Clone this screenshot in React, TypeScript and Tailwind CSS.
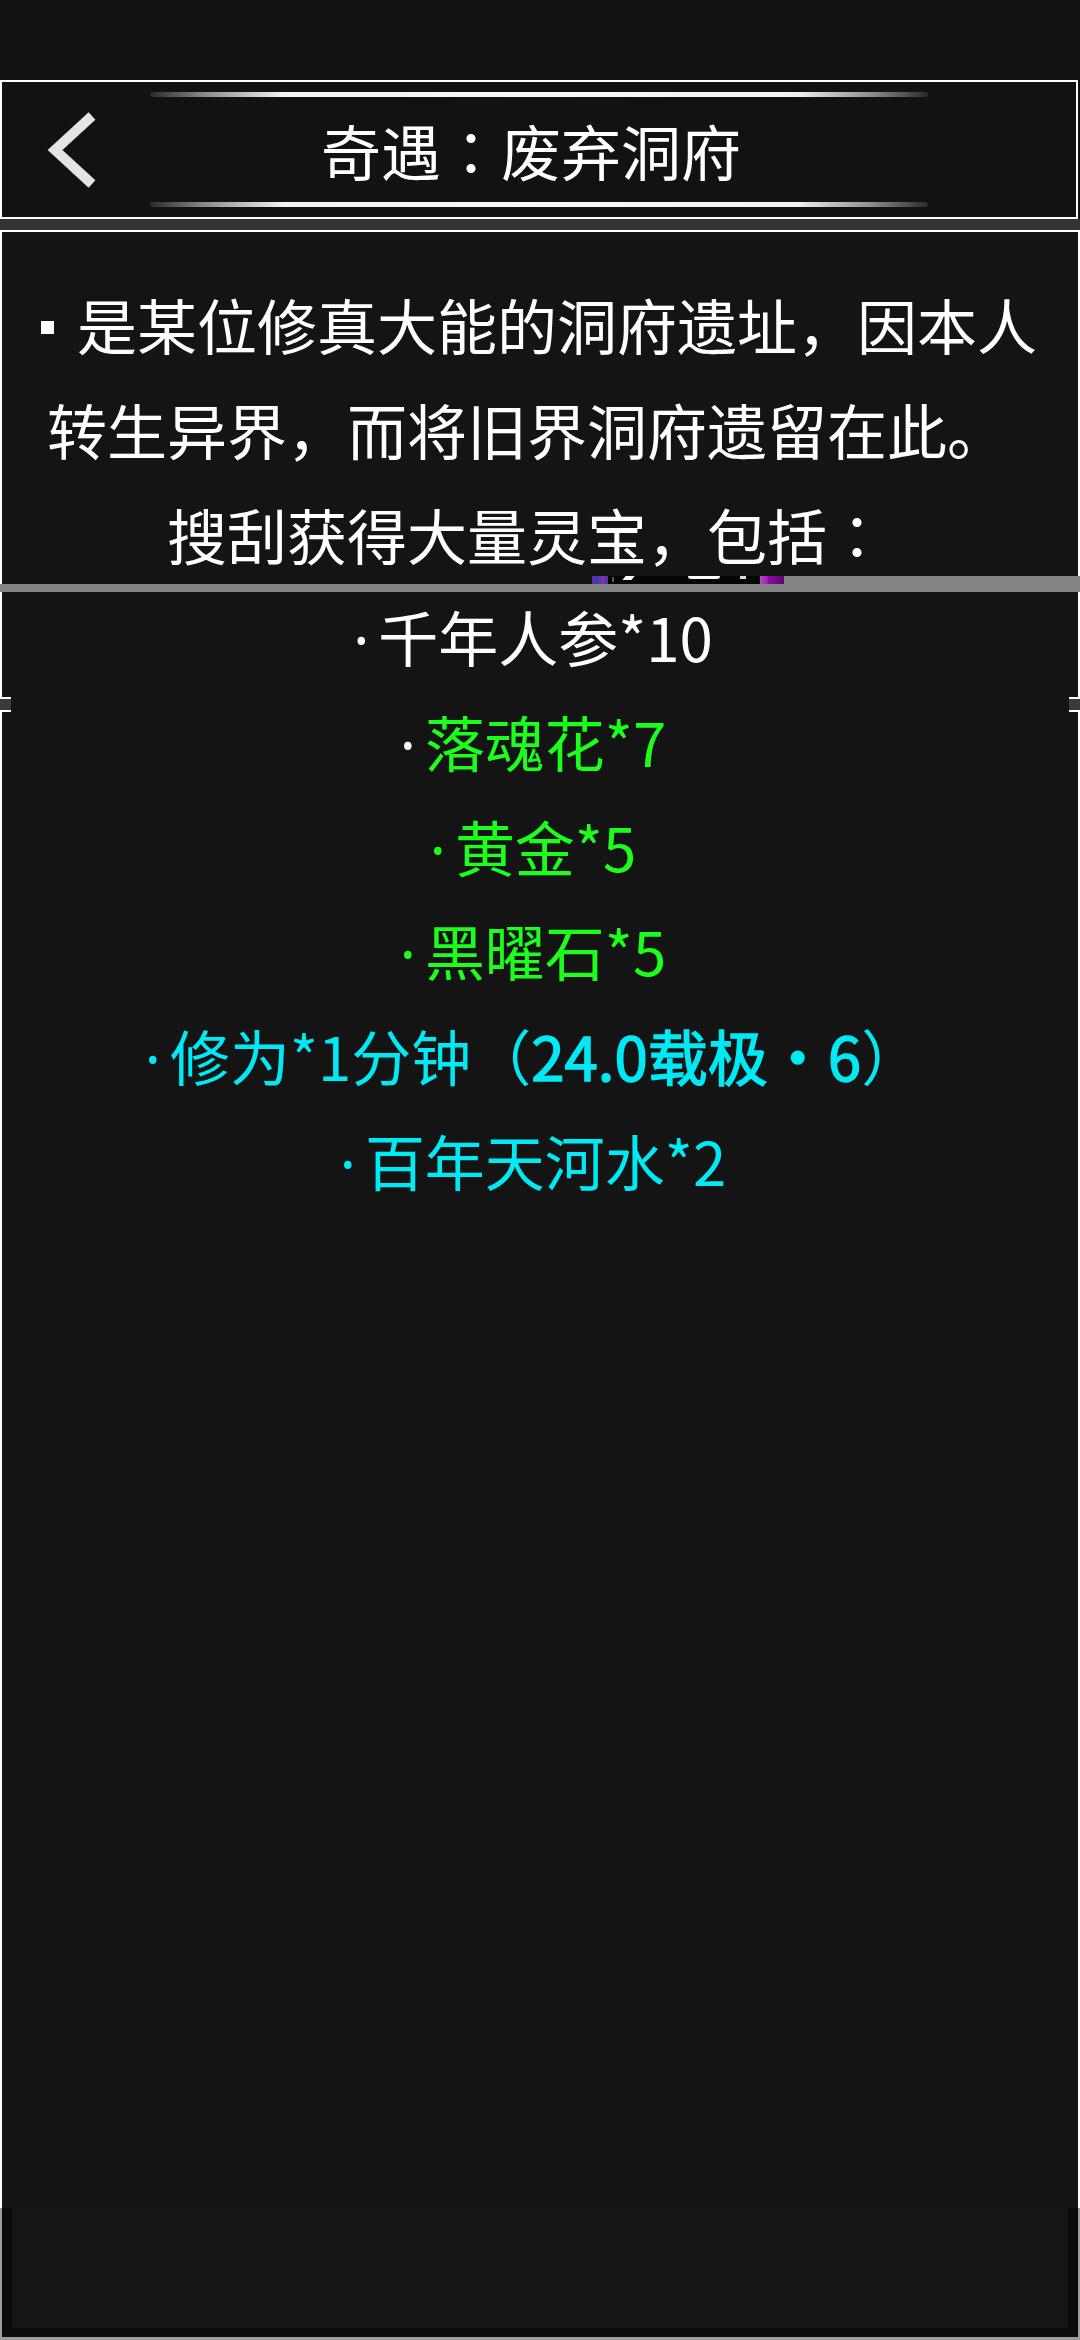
const Dot = () => <span className="font-['Noto_Sans',sans-serif] leading-none mr-[9px]">·</span>;
const Colon = () => <span className="font-['Noto_Sans_CJK_JP',sans-serif] leading-none">：</span>;

export default function App() {
  return (
    <div className="relative w-[1080px] h-[2340px] bg-[#111111] flex flex-col overflow-hidden font-['Noto_Sans_CJK_SC',sans-serif]">
      {/* status area */}
      <div className="h-[80px] shrink-0 bg-[#111111]" />

      {/* header */}
      <div className="h-[139px] w-[1078px] shrink-0 border-2 border-white bg-[#121212] grid grid-cols-[148px_778px_1fr]">
        <div className="h-full">
          <svg width="148" height="135" viewBox="0 0 148 135">
            <polyline
              points="90,34 53,68 90,102"
              fill="none"
              stroke="#e4e4e4"
              strokeWidth="10"
              strokeLinejoin="miter"
              strokeLinecap="butt"
            />
          </svg>
        </div>
        <div className="flex flex-col h-full">
          <div className="mt-[10px] h-[5px] rounded-full bg-[linear-gradient(to_right,#2a2a2a,#8a8a8a_7%,#f2f2f2_17%,#f8f8f8_50%,#f2f2f2_83%,#8a8a8a_93%,#2a2a2a)]" />
          <div className="flex-1 flex items-center justify-center pr-[16px]">
            <span className="text-[60px] leading-none text-white whitespace-nowrap">
              奇遇<Colon />废弃洞府
            </span>
          </div>
          <div className="mb-[10px] h-[5px] rounded-full bg-[linear-gradient(to_right,#2a2a2a,#8a8a8a_7%,#f2f2f2_17%,#f8f8f8_50%,#f2f2f2_83%,#8a8a8a_93%,#2a2a2a)]" />
        </div>
        <div />
      </div>

      {/* separator */}
      <div className="h-[11px] shrink-0 bg-[#333333]" />

      {/* content */}
      <div className="flex-1 border-t-2 border-l-2 border-r-2 border-white bg-[#141414] pt-[39px] text-[60px] text-white">
        <div className="pr-[26px] text-center leading-[105px] whitespace-nowrap">
          <div>
            <span className="inline-block w-[13px] h-[13px] bg-white ml-[24px] mr-[23px] mb-[16px]" />
            是某位修真大能的洞府遗址，因本人
          </div>
          <div>转生异界，而将旧界洞府遗留在此。</div>
          <div>
            搜刮获得大量灵宝，包括<Colon />
          </div>
        </div>
        <div className="-mt-[2px] pr-[14px] text-center leading-[104.8px] whitespace-nowrap">
          <div>
            <Dot />千年人参*10
          </div>
          <div>
            <Dot />
            <span className="text-[#1cff1c]">落魂花*7</span>
          </div>
          <div className="text-[#1cff1c]">
            <Dot />黄金*5
          </div>
          <div className="text-[#1cff1c]">
            <Dot />黑曜石*5
          </div>
          <div className="text-[#00eaf5]">
            <Dot />修为*1分钟（<span className="[-webkit-text-stroke:1.4px_#00eaf5]">24.0载极・6</span>）
          </div>
          <div className="text-[#00eaf5]">
            <Dot />百年天河水*2
          </div>
        </div>
      </div>

      {/* bottom panel */}
      <div className="h-[132px] shrink-0 border-l-2 border-r-2 border-b-[3px] border-[#9c9c9c] bg-[#151515]">
        <div className="h-full border-l-[10px] border-r-[10px] border-b-[9px] border-[#0b0b0b] bg-[#151515]" />
      </div>

      {/* glitch overlays */}
      <div className="absolute top-[584px] left-0 w-full h-[8px] bg-[#858585]" />
      <div className="absolute top-[576px] left-[784px] right-0 h-[8px] bg-[#858585]" />
      <div className="absolute top-[576px] left-[592px] w-[192px] h-[8px] bg-[#050505]">
        <div className="absolute left-0 top-0 w-[16px] h-[8px] bg-[linear-gradient(to_right,#6a2a9a,#3a3ac0,#8a30a0,#3040b0)]" />
        <div className="absolute left-[20px] top-[1px] w-[2px] h-[5px] bg-[#555555]" />
        <div className="absolute left-[32px] top-0 w-[9px] h-[4px] bg-white -skew-x-[40deg]" />
        <div className="absolute left-[96px] top-0 w-[32px] h-[3px] rounded-b-full bg-white" />
        <div className="absolute left-[148px] top-0 w-[6px] h-[3px] bg-[#dddddd]" />
        <div className="absolute left-[168px] top-0 w-[8px] h-[8px] bg-[linear-gradient(to_right,#c040d0,#9a20b0)]" />
        <div className="absolute left-[176px] top-0 w-[16px] h-[8px] bg-[linear-gradient(to_right,#8a10a8,#600070)]" />
      </div>
      <div className="absolute top-[697px] left-0 w-[11px] h-[15px] border-y-2 border-white bg-[#3a3a3a]" />
      <div className="absolute top-[697px] left-[1069px] w-[11px] h-[15px] border-y-2 border-white bg-[#3a3a3a]" />
    </div>
  );
}
